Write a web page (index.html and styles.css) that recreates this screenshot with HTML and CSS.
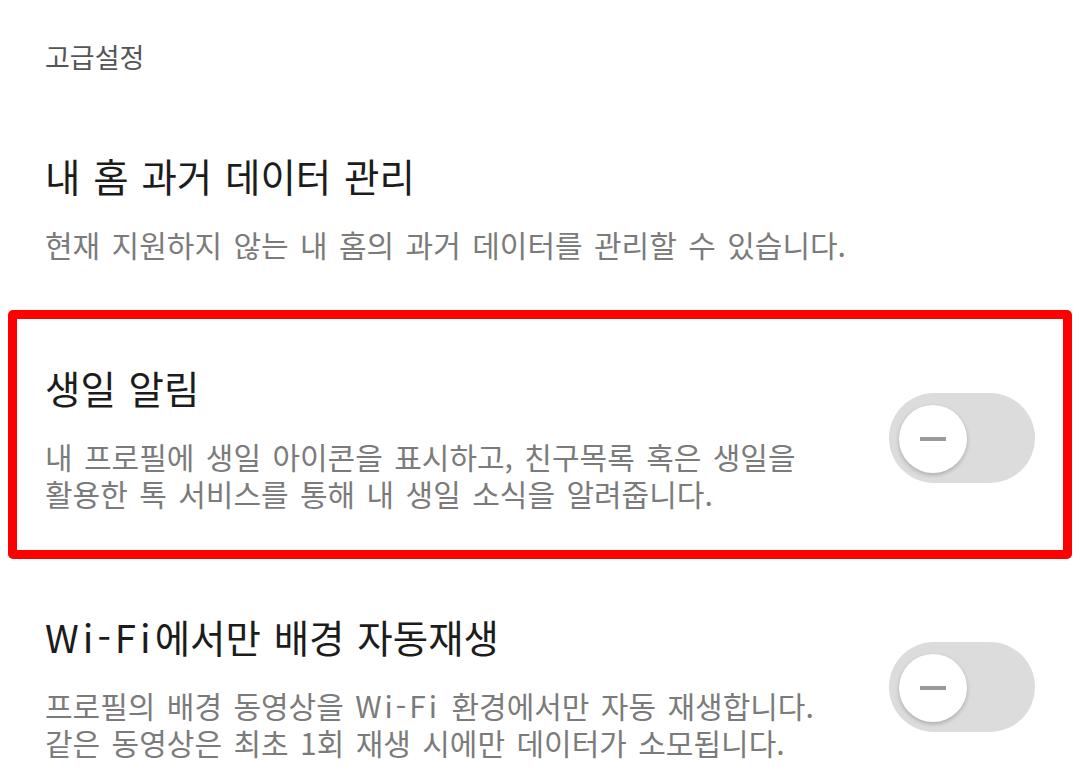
FILE: index.html
```html
<!DOCTYPE html>
<html lang="ko">
<head>
    <meta charset="UTF-8">
    <meta name="viewport" content="width=device-width, initial-scale=1.0">
    <title>고급설정</title>
    <link rel="stylesheet" href="styles.css">
</head>
<body>
    <div class="settings">
        <h2 class="group-title">고급설정</h2>

        <div class="item">
            <div class="item-text">
                <h3 class="item-title">내 홈 과거 데이터 관리</h3>
                <p class="item-desc">현재 지원하지 않는 내 홈의 과거 데이터를 관리할 수 있습니다.</p>
            </div>
        </div>

        <div class="item highlight">
            <div class="item-text">
                <h3 class="item-title">생일 알림</h3>
                <p class="item-desc">내 프로필에 생일 아이콘을 표시하고, 친구목록 혹은 생일을<br>활용한 톡 서비스를 통해 내 생일 소식을 알려줍니다.</p>
            </div>
            <div class="toggle"><span class="knob"></span></div>
        </div>

        <div class="item">
            <div class="item-text">
                <h3 class="item-title"><span class="latin">Wi-Fi</span>에서만 배경 자동재생</h3>
                <p class="item-desc">프로필의 배경 동영상을 <span class="latin">Wi-Fi</span> 환경에서만 자동 재생합니다.<br>같은 동영상은 최초 1회 재생 시에만 데이터가 소모됩니다.</p>
            </div>
            <div class="toggle"><span class="knob"></span></div>
        </div>
    </div>
</body>
</html>
```

FILE: styles.css
```css
body {
    margin: 0;
    background-color: #fff;
    font-family: "Noto Sans CJK KR", "Noto Sans", sans-serif;
}
.settings {
    padding: 0 8px;
}
.group-title {
    margin: 0 0 23px;
    padding: 39px 0 0 37px;
    font-size: 27px;
    font-weight: normal;
    line-height: 36px;
    color: #555;
}
.item {
    display: flex;
    align-items: center;
    padding: 44px 28px 38px;
    border: 9px solid transparent;
    border-radius: 5px;
}
.item.highlight {
    border-color: #ff0000;
}
.item-text {
    flex: 1;
}
.item-title {
    margin: 0;
    font-size: 38.5px;
    font-weight: normal;
    line-height: 48px;
    word-spacing: 2px;
    color: #1c1c1c;
}
.item-title .latin {
    letter-spacing: 4px;
}
.item-desc {
    margin: 27px 0 0;
    font-size: 30px;
    line-height: 37px;
    word-spacing: 3px;
    color: #7b7b7b;
}
.item-desc .latin {
    letter-spacing: 3px;
}
.toggle {
    position: relative;
    flex: none;
    width: 146px;
    height: 90px;
    border-radius: 45px;
    background-color: #dcdcdc;
}
/* 꺼진 상태의 손잡이 */
.knob {
    position: absolute;
    left: 10px;
    top: 12px;
    width: 68px;
    height: 68px;
    border-radius: 50%;
    background-color: #fff;
    box-shadow: 0 2px 4px rgba(0, 0, 0, 0.22);
}
.knob::after {
    content: "";
    position: absolute;
    left: 21px;
    top: 32px;
    width: 26px;
    height: 4px;
    background-color: #9a9a9a;
}
```
